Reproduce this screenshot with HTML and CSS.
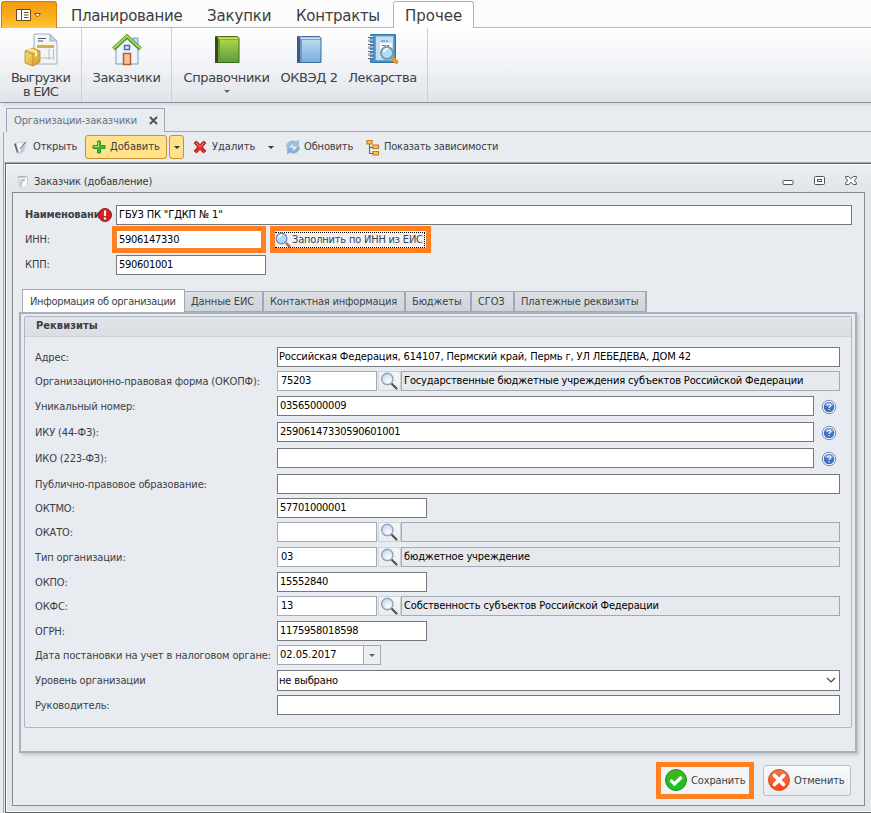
FILE: index.html
```html
<!DOCTYPE html>
<html lang="ru">
<head>
<meta charset="utf-8">
<title>Заказчик (добавление)</title>
<link rel="stylesheet" href="styles.css">
</head>
<body>
<svg class="defs" width="0" height="0">
  <defs>
    <linearGradient id="gGreen" x1="0" y1="0" x2="0" y2="1"><stop offset="0" stop-color="#b4dc50"/><stop offset="1" stop-color="#5b9a3c"/></linearGradient>
    <linearGradient id="gBlue" x1="0" y1="0" x2="0" y2="1"><stop offset="0" stop-color="#c4e2f5"/><stop offset="1" stop-color="#78acdd"/></linearGradient>
    <linearGradient id="gGold" x1="0" y1="0" x2="1" y2="1"><stop offset="0" stop-color="#fbe58a"/><stop offset="1" stop-color="#d49a1c"/></linearGradient>
    <linearGradient id="gOk" x1="0" y1="0" x2="0" y2="1"><stop offset="0" stop-color="#45b51c"/><stop offset="1" stop-color="#12c41c"/></linearGradient>
    <linearGradient id="gNo" x1="0" y1="0" x2="0" y2="1"><stop offset="0" stop-color="#f0774d"/><stop offset="1" stop-color="#fa4316"/></linearGradient>
    <radialGradient id="gLens" cx=".6" cy=".7" r=".7"><stop offset="0" stop-color="#fff"/><stop offset="1" stop-color="#bcd6f4"/></radialGradient>
    <symbol id="lookup" viewBox="0 0 18 18">
      <path d="M11.5 11.5l5 5" stroke="#50545a" stroke-width="2.2" stroke-linecap="round"/>
      <circle cx="7.3" cy="7" r="5.7" fill="url(#gLens)" stroke="#98a3b4" stroke-width="1.4"/>
    </symbol>
    <symbol id="help" viewBox="0 0 16 16">
      <circle cx="8" cy="8" r="6.700" fill="#fff" stroke="#7384b8" stroke-width="1"/>
      <circle cx="8" cy="8" r="5.300" fill="#3f70c2"/>
      <path d="M3.500 6.500a4.800 4.800 0 0 1 9 0q-4 2-9 0z" fill="#7ba5e2"/>
      <path d="M6.300 6.500q.1-1.500 1.800-1.500t1.700 1.400q0 .8-.9 1.300-.8.4-.8 1.200M8.100 10v1.200" fill="none" stroke="#fff" stroke-width="1.200"/>
    </symbol>
  </defs>
</svg>

<nav class="menu">
  <div class="app-btn">
    <svg width="28" height="14" viewBox="0 0 28 14"><path d="M1.500 1.500h14v11h-14z" fill="#fff" stroke="#6b4a10"/><path d="M6.500 1v12M9 4.500h4.500M9 7h4.500M9 9.500h4.500" stroke="#6b4a10" fill="none"/><path d="M19.500 5.500h6l-3 3.500z" fill="#fff" stroke="#7a5512"/></svg>
  </div>
  <span class="m m1">Планирование</span><span class="m m2">Закупки</span><span class="m m3">Контракты</span><span class="m active">Прочее</span><span class="m-rest"></span>
</nav>

<div class="ribbon">
  <div class="group g1">
    <div class="big">
      <svg width="34" height="34" viewBox="0 0 34 34"><path d="M10 1h16l7 7v23H10z" fill="#f2f4f8" stroke="#a5aebb"/><path d="M26 1v7h7z" fill="#c9d1dc" stroke="#a5aebb"/><path d="M25 16v11M13 25h17M29.500 16v11" stroke="#b9c0cc"/><path d="M13 12h17v3H13z" fill="#d2b33c"/><path d="M14 5.500h8M14 8h5" stroke="#555" stroke-width="1"/><path d="M1 18l8-3 7 3v11l-7 4-8-3z" fill="url(#gGold)" stroke="#b98a20" stroke-width=".8"/><path d="M1 18l8 3 7-3M9 21v12" stroke="#c9952a" fill="none"/><path d="M4 16.500l7 3v4l2-1v-4l-7-3z" fill="#fff3b8"/></svg>
      <span class="cap c1">Выгрузки<br>в ЕИС</span>
    </div>
  </div>
  <div class="group g2">
    <div class="big">
      <svg width="34" height="34" viewBox="0 0 34 34"><path d="M23 5h5v9h-5z" fill="#c8dbf3" stroke="#7b9ccb"/><path d="M6 15L17 5l11 10v16H6z" fill="#eef4fc" stroke="#7b97bf"/><path d="M3.500 16L17 3.500 30.500 16" fill="none" stroke="#538c22" stroke-width="4"/><path d="M3.500 15.500L17 3l13.500 12.500" fill="none" stroke="#a5d75a" stroke-width="2"/><path d="M14.500 12.500h5v4h-5z" fill="#d7e8fa" stroke="#456fb0" stroke-width="1.500"/><path d="M13.500 20.500h7v11h-7z" fill="#f4c49c" stroke="#bd5b1c" stroke-width="1.500"/></svg>
      <span class="cap">Заказчики</span>
    </div>
  </div>
  <div class="group g3">
    <div class="big b3">
      <svg width="34" height="34" viewBox="0 0 34 34"><path d="M5.500 3.500h22l1.500 1.500v24.500H5.500z" fill="url(#gGreen)" stroke="#39661f"/><path d="M5 4l3-1v26l-3 1z" fill="#3b4522"/><path d="M8 3.500h2V29H8z" fill="#6a9a30"/><path d="M7 4h21l1 2.500H9z" fill="#d9e456" stroke="#6d9422" stroke-width=".7"/></svg>
      <span class="cap">Справочники</span><i class="caret"></i>
    </div>
    <div class="big b4">
      <svg width="34" height="34" viewBox="0 0 34 34"><path d="M5.500 3.500h22l1.500 1.500v24.500H5.500z" fill="url(#gBlue)" stroke="#41689f"/><path d="M5 4l3-1v26l-3 1z" fill="#43587d"/><path d="M8 3.500h2V29H8z" fill="#7395c2"/><path d="M7 4h21l1 2.500H9z" fill="#d7e5f2" stroke="#5a84b8" stroke-width=".7"/></svg>
      <span class="cap c4">ОКВЭД 2</span>
    </div>
    <div class="big b5">
      <svg width="34" height="34" viewBox="0 0 34 34"><path d="M4.500 1.500h25v28h-25z" fill="#4d8dbf" stroke="#2d77ad"/><path d="M9.500 3h18v24.500h-18z" fill="#c4dff4" stroke="#6ba5d2"/><path d="M14 10h12v14H14z" fill="#fff"/><path d="M15 8h8M16 12.500h8" stroke="#497cb0" stroke-dasharray="4 1 2 1"/><path d="M2 4h5M2 7.500h5M2 11h5M2 14.500h5M2 18h5M2 21.500h5M2 25h5" stroke="#606a76" stroke-width="2"/><path d="M2 3.500h5M2 7h5M2 10.500h5M2 14h5M2 17.500h5M2 21h5M2 24.500h5" stroke="#eef2f6"/><path d="M26.500 25.500l4 3.500" stroke="#e59a20" stroke-width="4" stroke-linecap="round"/><circle cx="21" cy="20" r="6" fill="#a9e2fa" stroke="#7b95ac" stroke-width="2"/><path d="M17.500 19q1-3.500 4.500-3.500" stroke="#fff" fill="none" stroke-width="1.500"/></svg>
      <span class="cap">Лекарства</span>
    </div>
  </div>
</div>

<div class="doc-tabs"><div class="doc-tab"><span>Организации-заказчики</span><svg width="9" height="9" viewBox="0 0 9 9"><path d="M1 1l7 7M8 1l-7 7" stroke="#50555c" stroke-width="2"/></svg></div><div class="doc-rest"></div></div>

<main class="doc">
  <div class="toolbar">
    <div class="tool t1"><svg width="16" height="16" viewBox="0 0 16 16"><path d="M1 5l2-1 3 9-2 1z" fill="#4e6a84"/><path d="M3 4l7-1 1 9-5 3z" fill="#f7f9fb" stroke="#bcc4cd" stroke-width=".8"/><path d="M11 3l3-1-3 10-5 3z" fill="#c3cbd4"/><path d="M12.500 3L7 10" stroke="#5f7288"/></svg><span>Открыть</span></div>
    <div class="tool hot"><svg width="14" height="14" viewBox="0 0 14 14"><path d="M5.500 1h3v4.500H13v3H8.500V13h-3V8.500H1v-3h4.500z" fill="#3fb83a" stroke="#2c9430"/><path d="M6.500 2v4.500H2" stroke="#a1e27c" fill="none"/></svg><span>Добавить</span></div>
    <div class="hot drop"><i class="caret dark"></i></div>
    <div class="tool t3"><svg width="14" height="14" viewBox="0 0 14 14"><path d="M1 3l2.500-2L7 4.500 10.500 1 13 3 9.500 7l3.500 4-2.500 2L7 9.500 3.500 13 1 11l3.500-4z" fill="#d92c2c" stroke="#a01a1a" stroke-width=".8"/><path d="M3 3l4 4 4-4" stroke="#ef8178" fill="none"/></svg><span>Удалить</span><i class="caret dark"></i></div>
    <div class="tool t4"><svg width="16" height="16" viewBox="0 0 16 16"><path d="M1.500 8a6 6 0 0 1 9.500-5L13.500 1v6H8l1.500-2Q6 3.500 4.500 8z" fill="#9dc0e2" stroke="#86a9cf" stroke-width=".6"/><path d="M14.500 8a6 6 0 0 1-9.500 5L2.500 15V9H8l-1.500 2q4 1.500 5.500-3z" fill="#85add5" stroke="#86a9cf" stroke-width=".6"/></svg><span>Обновить</span></div>
    <div class="tool t5"><svg width="14" height="17" viewBox="0 0 14 17"><path d="M3.500 5v9.500H8M3.500 8.500H8" fill="none" stroke="#52617b"/><path d="M1 1.500h5v3.500H1zM7 6h5.500v3.500H7zM7 12.500h5.500V16H7z" fill="#fbc25d" stroke="#c27a1c" stroke-width="1.200"/></svg><span>Показать зависимости</span></div>
  </div>

  <section class="win">
    <header class="title"><svg width="12" height="14" viewBox="0 0 12 14"><path d="M1.500 1.500h9v9l-2.500 2.500h-5z" fill="#f8f9fb" stroke="#c8cdd3"/><path d="M1 2h8M3 5h5M4 8l3-3M4 7v5" stroke="#979da4"/></svg><span class="title-text">Заказчик (добавление)</span>
      <span class="ctl"><svg width="12" height="12" viewBox="0 0 12 12"><rect x="1" y="5.500" width="10" height="4" rx="1" fill="#fff" stroke="#4f565e"/></svg><svg width="12" height="12" viewBox="0 0 12 12"><rect x=".5" y="1.500" width="10" height="8" rx="1" fill="#fff" stroke="#4f565e"/><rect x="3.500" y="4.500" width="4" height="2" fill="#fff" stroke="#4f565e"/></svg><svg width="12" height="12" viewBox="0 0 12 12"><path d="M.7 1.500h3L6 3.700 8.300 1.500h3v2L9 5.500l2.300 2v2h-3L6 7.300 3.700 9.500h-3v-2L3 5.500l-2.300-2z" fill="#fff" stroke="#4f565e"/></svg></span>
    </header>
    <div class="pane">
      <div class="head">
        <div class="hrow"><label class="req">Наименование:</label><svg class="err" width="14" height="14" viewBox="0 0 14 14"><circle cx="7" cy="7" r="6.500" fill="#cf2028" stroke="#a31a20"/><path d="M7 2.500v5.500M7 9.500v2" stroke="#fff" stroke-width="2.200"/></svg><div class="field name"><span>ГБУЗ ПК "ГДКП № 1"</span></div></div>
        <div class="hrow inn"><label>ИНН:</label><div class="mark mark-inn"><span class="num">5906147330</span></div><div class="mark mark-fill"><div class="fill-btn"><svg width="16" height="16" viewBox="0 0 16 16"><path d="M11 11l4 4" stroke="#a9744e" stroke-width="2.500"/><circle cx="6.500" cy="6.500" r="5.300" fill="#b4dbfa" stroke="#6f8fc8" stroke-width="1.400"/><path d="M3.500 6q.5-3 3.500-3" stroke="#fff" stroke-width="1.500" fill="none"/></svg><span>Заполнить по ИНН из ЕИС</span></div></div></div>
        <div class="hrow kpp"><label>КПП:</label><div class="field short num">590601001</div></div>
      </div>
      <div class="tabs"><div class="tab on">Информация об организации</div><div class="tab">Данные ЕИС</div><div class="tab">Контактная информация</div><div class="tab">Бюджеты</div><div class="tab">СГОЗ</div><div class="tab">Платежные реквизиты</div></div>
      <div class="page">
        <fieldset class="box">
          <div class="box-head">Реквизиты</div>
          <div class="rows">
            <div class="row r24"><label>Адрес:</label><div class="field full">Российская Федерация, 614107, Пермский край, Пермь г, УЛ ЛЕБЕДЕВА, ДОМ 42</div></div>
            <div class="row r25"><label>Организационно-правовая форма (ОКОПФ):</label><div class="field soft code num">75203</div><div class="look"><svg width="18" height="18"><use href="#lookup"/></svg></div><div class="field ro">Государственные бюджетные учреждения субъектов Российской Федерации</div></div>
            <div class="row r26"><label>Уникальный номер:</label><div class="field mid num">03565000009</div><svg class="help" width="16" height="16"><use href="#help"/></svg></div>
            <div class="row r26"><label>ИКУ (44-ФЗ):</label><div class="field mid num">25906147330590601001</div><svg class="help" width="16" height="16"><use href="#help"/></svg></div>
            <div class="row r26"><label>ИКО (223-ФЗ):</label><div class="field mid"></div><svg class="help" width="16" height="16"><use href="#help"/></svg></div>
            <div class="row r24"><label>Публично-правовое образование:</label><div class="field full"></div></div>
            <div class="row r24"><label>ОКТМО:</label><div class="field short num">57701000001</div></div>
            <div class="row r25"><label>ОКАТО:</label><div class="field soft code"></div><div class="look"><svg width="18" height="18"><use href="#lookup"/></svg></div><div class="field ro"></div></div>
            <div class="row r25"><label>Тип организации:</label><div class="field soft code num">03</div><div class="look"><svg width="18" height="18"><use href="#lookup"/></svg></div><div class="field ro">бюджетное учреждение</div></div>
            <div class="row r24"><label>ОКПО:</label><div class="field short num">15552840</div></div>
            <div class="row r25"><label>ОКФС:</label><div class="field soft code num">13</div><div class="look"><svg width="18" height="18"><use href="#lookup"/></svg></div><div class="field ro">Собственность субъектов Российской Федерации</div></div>
            <div class="row r24"><label>ОГРН:</label><div class="field short num">1175958018598</div></div>
            <div class="row r25"><label>Дата постановки на учет в налоговом органе:</label><div class="field soft date"><span class="w-date">02.05.2017</span><div class="dd"><i class="caret"></i></div></div></div>
            <div class="row r25"><label>Уровень организации</label><div class="field full select"><span>не выбрано</span><svg width="10" height="7" viewBox="0 0 10 7"><path d="M1 1l4 4 4-4" fill="none" stroke="#444" stroke-width="1.200"/></svg></div></div>
            <div class="row r24"><label>Руководитель:</label><div class="field full"></div></div>
          </div>
        </fieldset>
      </div>
      <footer class="actions">
        <div class="mark save"><svg width="22" height="22" viewBox="0 0 22 22"><circle cx="11" cy="11" r="10.500" fill="url(#gOk)" stroke="#278e22"/><path d="M5.500 11l4 4 7-7" fill="none" stroke="#fff" stroke-width="3.200"/></svg><span>Сохранить</span></div>
        <div class="cancel"><svg width="22" height="22" viewBox="0 0 22 22"><circle cx="11" cy="11" r="10.500" fill="url(#gNo)" stroke="#d2532e"/><path d="M6.500 6.500l9 9M15.500 6.500l-9 9" stroke="#fff" stroke-width="3.800" stroke-linecap="round"/></svg><span>Отменить</span></div>
      </footer>
    </div>
  </section>
</main>
</body>
</html>
```
FILE: styles.css
```css
* { box-sizing: border-box; }
body { margin: 0; width: 871px; height: 813px; overflow: hidden; background: #e8ebf0; color: #3b3f45; font: 11px/14px "DejaVu Sans Condensed", "DejaVu Sans", sans-serif; font-stretch: condensed; letter-spacing: -.14px; white-space: nowrap; display: flex; flex-direction: column; }
svg { flex: none; display: block; }
.defs { position: absolute; }
fieldset { margin: 0; padding: 0; min-width: 0; }
.num { letter-spacing: -.28px; }

.menu { display: flex; flex: none; height: 28px; background: #fbfbfc; font: 15px/19px "DejaVu Sans", sans-serif; font-stretch: normal; letter-spacing: -.32px; color: #3d3d3d; }
.app-btn { width: 56px; margin-left: 1px; height: 27px; margin-top: 1px; border: 1px solid #d57d13; border-bottom: 0; border-radius: 3px 3px 0 0; background: linear-gradient(#f49a11, #fbab1c 50%, #ffc832); display: flex; align-items: center; justify-content: center; }
.m { padding-top: 7px; border-bottom: 1px solid #b4b8be; }
.m1 { width: 137px; padding-left: 14px; }
.m2 { width: 89px; padding-left: 13px; letter-spacing: -.15px; }
.m3 { width: 110px; padding-left: 13px; }
.active { width: 81px; padding: 5px 0 0 11px; margin-top: 1px; border: 1px solid #b0b4ba; border-bottom: 0; border-radius: 3px 3px 0 0; background: #fff; letter-spacing: 0; }
.m-rest { flex: 1; border-bottom: 1px solid #b4b8be; }

.ribbon { display: flex; flex: none; height: 75px; background: linear-gradient(#fff, #f6f7f9 35%, #e0e4e9); border-bottom: 1px solid #8b9199; font: 13px/14px "DejaVu Sans", sans-serif; font-stretch: normal; letter-spacing: -.4px; color: #3d4148; }
.group { border-right: 1px solid #cdd1d7; display: flex; }
.g1 { width: 82px; }
.g2 { width: 90px; }
.g3 { width: 256px; padding-left: 9px; }
.big { flex: 1; display: flex; flex-direction: column; align-items: center; padding-top: 5px; }
.b3 { flex: 0 0 91px; }
.b4 { flex: 0 0 74px; }
.b5 { flex: 0 0 73px; }
.cap { margin-top: 4px; text-align: center; }
.c1 { letter-spacing: -.75px; }
.caret { width: 0; height: 0; border: 3px solid transparent; border-top: 3px solid #5f656d; border-bottom: 0; margin-top: 5px; }
.caret.dark { border-top-color: #33363b; margin: 0; }

.doc-tabs { display: flex; flex: none; height: 29px; padding-top: 5px; margin-left: 3px; background: linear-gradient(#d5dae0, #e8ebf0 4px); }
.doc-tab { width: 159px; margin-left: 3px; border: 1px solid #a0a7b3; border-bottom: 0; display: flex; align-items: center; justify-content: space-between; padding: 0 6px 0 7px; color: #6b717a; }
.doc-rest { flex: 1; border-bottom: 1px solid #a0a7b3; }
.doc { flex: 1; margin-left: 3px; border-left: 1px solid #a0a7b3; display: flex; flex-direction: column; min-height: 0; }
.toolbar { flex: none; height: 31px; display: flex; align-items: center; border-bottom: 1px solid #a0a7b3; }
.tool { display: flex; align-items: center; gap: 4px; }
.t1 { width: 81px; padding-left: 9px; }
.hot { height: 24px; border: 1px solid #c98f37; border-radius: 3px; background: #ffe28a; }
.tool.hot { width: 82px; padding-left: 6px; gap: 4px; letter-spacing: 0; }
.drop { width: 15px; margin-left: 2px; display: flex; align-items: center; justify-content: center; }
.t3 { margin-left: 9px; width: 92px; gap: 5px; letter-spacing: 0; }
.t3 .caret { margin-left: 8px; }
.t4 { width: 81px; gap: 3px; }
.t5 { gap: 4px; letter-spacing: -.2px; }

.win { flex: 1; margin-left: 1px; border: 1px solid #5f6670; border-right: 0; box-shadow: inset 1px 1px #fff, inset 0 -1px #fff; background: linear-gradient(#eceef1, #e1e5e8 28px); padding: 0 6px 6px; display: flex; flex-direction: column; min-height: 0; }
.title { flex: none; height: 28px; padding: 8px 8px 0 5px; display: flex; align-items: center; }
.title-text { margin-left: 5px; color: #35393f; }
.ctl { margin-left: auto; display: flex; gap: 20px; position: relative; top: -1px; }
.ctl svg:last-child { margin-left: -1px; }
.pane { flex: none; height: 614px; border: 1px solid #858b94; background: #e8ebf0; width: 853px; padding: 12px 7px 0 6px; }
.field { height: 20px; border: 1px solid #74777c; background: #fff; color: #000; line-height: 18px; padding-left: 2px; flex: none; }
.soft { border-color: #a2a9b5; }
.head { height: 83px; padding-left: 6px; }
.hrow { display: flex; align-items: center; height: 20px; position: relative; }
.hrow label { width: 91px; flex: none; }
.hrow .req { font-weight: bold; overflow: hidden; width: 77px; margin-right: 14px; }
.err { position: absolute; left: 73px; top: 3px; }
.name { width: 736px; }
.inn { height: 27px; margin: 1px 0 2px; }
.hrow.inn label { width: 87px; }
.mark { border: 5px solid #ff8124; background: #fff; }
.mark-inn { width: 154px; height: 27px; line-height: 15px; color: #000; padding: 1px 0 0 2px; }
.mark-fill { width: 161px; height: 27px; margin-left: 4px; }
.fill-btn { height: 16px; margin-top: 1px; margin-right: 1px; display: flex; align-items: center; gap: 1px; border: 1px dotted #000; background: #f2f4f7; border-left: 0; letter-spacing: -.2px; }
.short { width: 150px; }

.tabs { display: flex; align-items: flex-end; height: 24px; padding-left: 3px; }
.tab { height: 21px; border: 1px solid #a2a9b4; border-left-width: 0; border-right-width: 2px; background: linear-gradient(#dce0e5, #cfd4d9); padding: 3px 6px 0; color: #3d4249; }
.tab.on { height: 23px; border-left-width: 1px; border-right-width: 1px; background: #fff; border-bottom: 0; padding: 5px 8px 0 7px; width: 163px; letter-spacing: -.3px; }
.tab:nth-child(2) { width: 79px; }
.tab:nth-child(3) { width: 142px; letter-spacing: -.2px; }
.tab:nth-child(4) { width: 66px; }
.tab:nth-child(5) { width: 43px; }
.tab:nth-child(6) { width: 132px; }
.page { height: 441px; width: 838px; border: 2px solid #aab0bb; box-shadow: 2px 2px 3px #c4c8ce; padding: 2px 3px 0; }
.box { height: 412px; border: 1px solid #b0b6bf; border-radius: 2px; }
.box-head { height: 20px; background: linear-gradient(#e1e4e8, #dadde2); border-bottom: 1px solid #cdd2d8; font-weight: bold; letter-spacing: .05px; padding: 2px 11px; }
.rows { padding: 10px 0 0 10px; }
.row { display: flex; align-items: flex-start; }
.row label { width: 242px; flex: none; padding-top: 4px; }
.r24 { height: 24px; }
.r25 { height: 25px; }
.r26 { height: 26px; }
.full { width: 563px; padding-left: 1px; }
.mid { width: 537px; }
.code { width: 100px; padding-left: 3px; }
.look { width: 23px; height: 20px; margin: 0 0 0 1px; border: 1px solid #cdd1d8; border-radius: 2px; background: linear-gradient(#f5f6f8, #e9ecef); display: flex; justify-content: center; padding-right: 1px; }
.ro { width: 439px; background: #e6e9ee; border-color: #a2a9b5; }
.help { margin: 3px 0 0 7px; }
.date { width: 104px; display: flex; justify-content: space-between; }
.w-date { letter-spacing: 0; }
.dd { width: 17px; border-left: 1px solid #a2a9b5; background: #eceef1; display: flex; justify-content: center; align-items: center; }
.dd .caret { margin: 0; }
.select { height: 21px; display: flex; justify-content: space-between; align-items: center; padding-right: 3px; }

.actions { display: flex; justify-content: flex-end; gap: 9px; padding: 9px 6px 0 0; }
.save { width: 98px; height: 37px; display: flex; align-items: center; gap: 4px; padding: 0 0 2px 4px; background: #f2f4f6; }
.cancel { width: 88px; height: 31px; margin-top: 3px; border: 1px solid #b9bfc8; border-radius: 3px; background: linear-gradient(#f8f9fa, #e9ecef); display: flex; align-items: center; gap: 4px; padding: 0 0 2px 4px; }
.save span, .cancel span { padding-top: 3px; }
```
